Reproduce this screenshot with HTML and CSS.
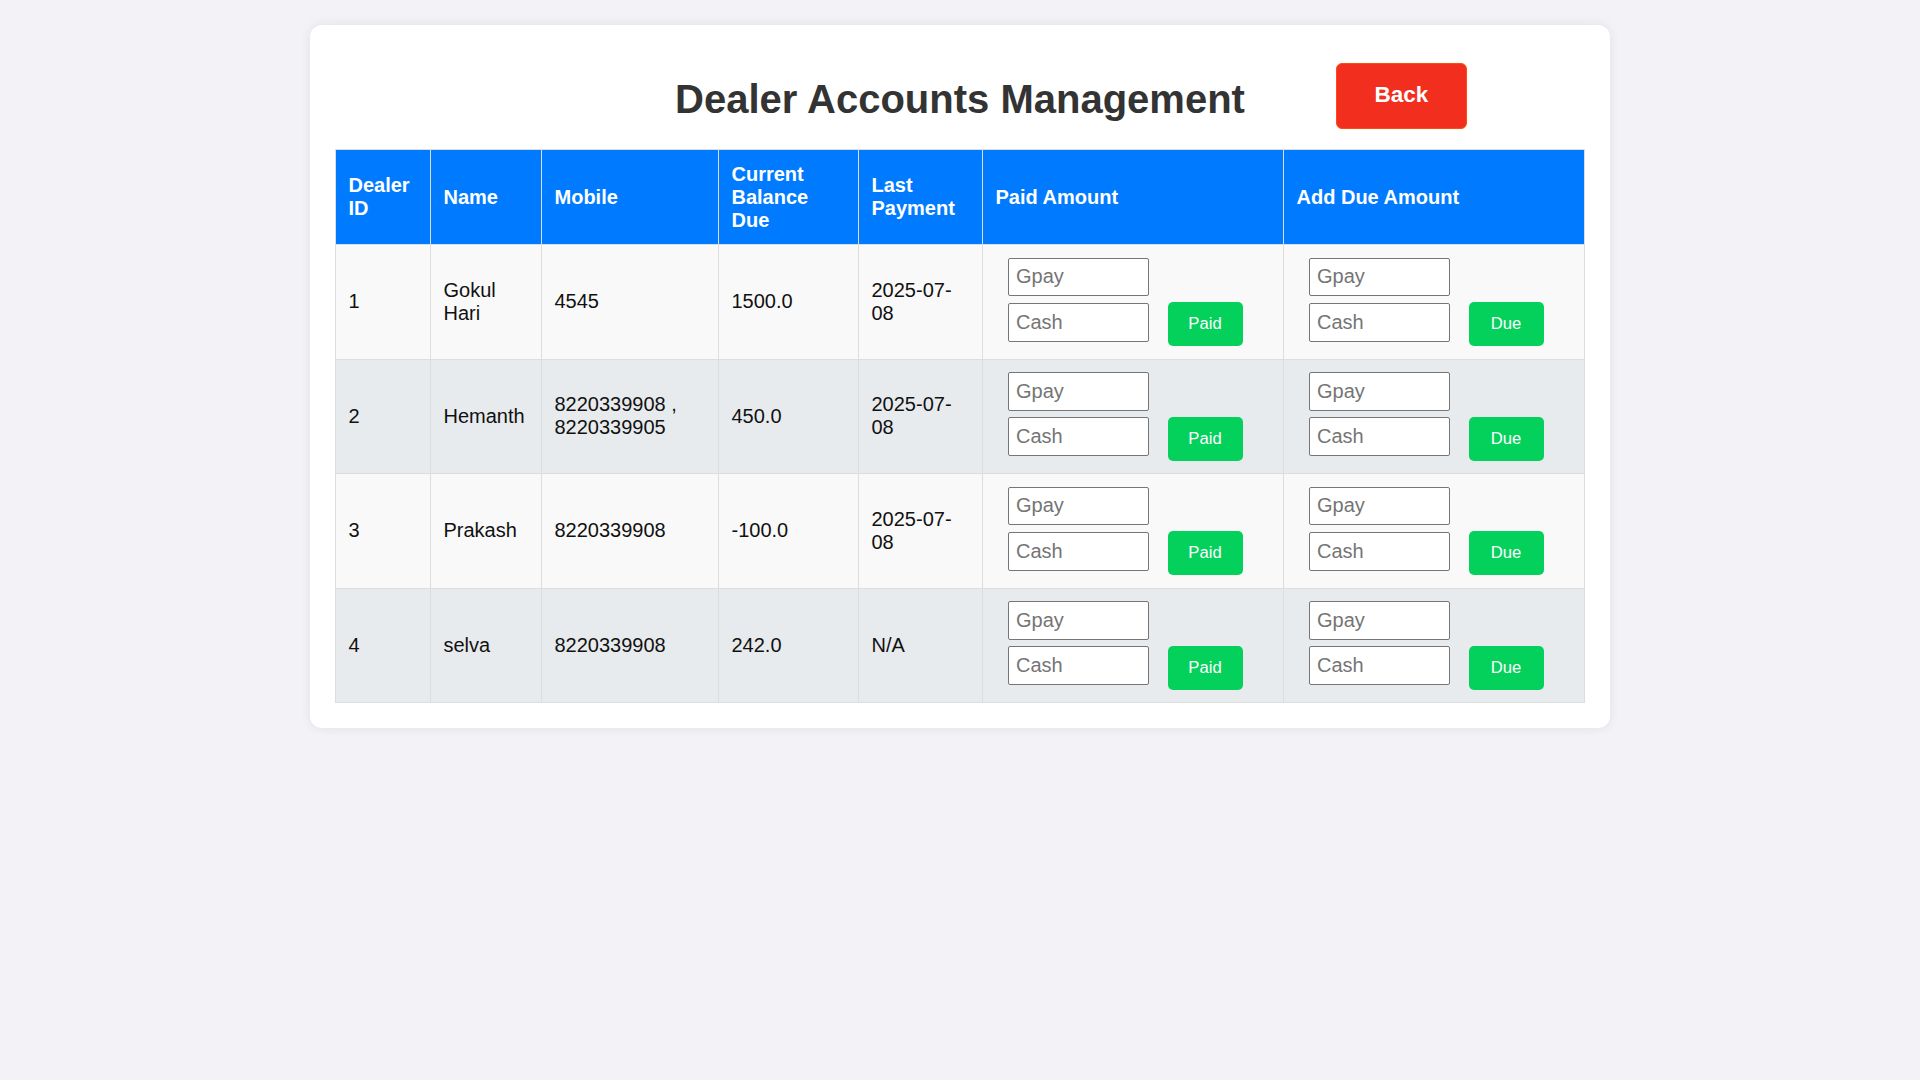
FILE: index.html
```html
<!DOCTYPE html>
<html lang="en">
<head>
<meta charset="utf-8">
<title>Dealer Accounts Management</title>
<link rel="stylesheet" href="styles.css">
</head>
<body>
<div class="card">
  <div class="page-head">
    <div class="head-spacer"></div>
    <h1 class="title">Dealer Accounts Management</h1>
    <div class="head-actions"><button class="btn-back" type="button">Back</button></div>
  </div>
  <table class="dealers">
    <colgroup>
      <col class="c-id"><col class="c-name"><col class="c-mobile"><col class="c-bal"><col class="c-last"><col class="c-paid"><col class="c-due">
    </colgroup>
    <thead>
      <tr>
        <th>Dealer ID</th>
        <th>Name</th>
        <th>Mobile</th>
        <th>Current Balance Due</th>
        <th>Last Payment</th>
        <th>Paid Amount</th>
        <th>Add Due Amount</th>
      </tr>
    </thead>
    <tbody>
      <tr>
        <td>1</td><td>Gokul Hari</td><td>4545</td><td>1500.0</td><td>2025-07-08</td>
        <td class="act"><div class="act-row"><div class="inputs"><input class="amt" placeholder="Gpay"><input class="amt" placeholder="Cash"></div><button class="btn-green" type="button">Paid</button></div></td>
        <td class="act"><div class="act-row"><div class="inputs"><input class="amt" placeholder="Gpay"><input class="amt" placeholder="Cash"></div><button class="btn-green" type="button">Due</button></div></td>
      </tr>
      <tr>
        <td>2</td><td>Hemanth</td><td>8220339908 , 8220339905</td><td>450.0</td><td>2025-07-08</td>
        <td class="act"><div class="act-row"><div class="inputs"><input class="amt" placeholder="Gpay"><input class="amt" placeholder="Cash"></div><button class="btn-green" type="button">Paid</button></div></td>
        <td class="act"><div class="act-row"><div class="inputs"><input class="amt" placeholder="Gpay"><input class="amt" placeholder="Cash"></div><button class="btn-green" type="button">Due</button></div></td>
      </tr>
      <tr>
        <td>3</td><td>Prakash</td><td>8220339908</td><td>-100.0</td><td>2025-07-08</td>
        <td class="act"><div class="act-row"><div class="inputs"><input class="amt" placeholder="Gpay"><input class="amt" placeholder="Cash"></div><button class="btn-green" type="button">Paid</button></div></td>
        <td class="act"><div class="act-row"><div class="inputs"><input class="amt" placeholder="Gpay"><input class="amt" placeholder="Cash"></div><button class="btn-green" type="button">Due</button></div></td>
      </tr>
      <tr>
        <td>4</td><td>selva</td><td>8220339908</td><td>242.0</td><td>N/A</td>
        <td class="act"><div class="act-row"><div class="inputs"><input class="amt" placeholder="Gpay"><input class="amt" placeholder="Cash"></div><button class="btn-green" type="button">Paid</button></div></td>
        <td class="act"><div class="act-row"><div class="inputs"><input class="amt" placeholder="Gpay"><input class="amt" placeholder="Cash"></div><button class="btn-green" type="button">Due</button></div></td>
      </tr>
    </tbody>
  </table>
</div>
</body>
</html>
```
FILE: styles.css
```css
* { box-sizing: border-box; }

body {
  margin: 0;
  padding: 25px 0;
  background: #f3f3f7;
  font-family: "Liberation Sans", Arial, sans-serif;
  font-size: 20px;
  color: #111;
}

.card {
  width: 1300px;
  margin: 0 auto;
  padding: 25px;
  background: #fff;
  border-radius: 12px;
  box-shadow: 0 0 12px rgba(0, 0, 0, 0.08);
}

.page-head {
  display: grid;
  grid-template-columns: 1fr auto 1fr;
  align-items: center;
  padding-top: 13px;
  margin-bottom: 20px;
}

.title {
  margin: 0;
  font-size: 40px;
  font-weight: bold;
  color: #333;
  line-height: normal;
  position: relative;
  top: 3px;
}

.head-actions {
  display: flex;
  justify-content: flex-start;
}

.btn-back {
  margin-left: 91px;
  width: 131px;
  height: 66px;
  background: #f22f1e;
  border: 1px solid #ff4a10;
  border-radius: 6px;
  color: #fff;
  font-family: "Liberation Sans", Arial, sans-serif;
  font-weight: bold;
  font-size: 22.5px;
  padding: 0 0 2px;
}

.dealers {
  width: 1249px;
  table-layout: fixed;
  border-collapse: collapse;
}

.c-id { width: 95px; }
.c-name { width: 111px; }
.c-mobile { width: 177px; }
.c-bal { width: 140px; }
.c-last { width: 124px; }
.c-paid { width: 301px; }
.c-due { width: 301px; }

.dealers th,
.dealers td {
  border: 1px solid #dddddd;
  padding: 12.5px;
  text-align: left;
  vertical-align: middle;
  line-height: normal;
}

.dealers th {
  background: #007bff;
  color: #fff;
  font-weight: bold;
}

.dealers tbody tr:nth-child(odd) { background: #f9f9f9; }
.dealers tbody tr:nth-child(even) { background: #e8ebee; }

.act-row {
  display: flex;
  align-items: flex-end;
  margin-left: 12.5px;
}

.inputs {
  display: flex;
  flex-direction: column;
  gap: 6.5px;
  margin-bottom: 4.5px;
}

.amt {
  display: block;
  width: 141px;
  height: 38.75px;
  padding: 0 7px;
  border: 1px solid #767676;
  border-radius: 2px;
  background: #fff;
  font-family: "Liberation Sans", Arial, sans-serif;
  font-size: 20px;
  color: #111;
}

.amt::placeholder { color: #757575; }

.btn-green {
  margin-left: 18.5px;
  width: 75px;
  height: 44px;
  border: none;
  border-radius: 5px;
  background: #03d15b;
  color: #fff;
  font-family: "Liberation Sans", Arial, sans-serif;
  font-size: 16.67px;
  padding: 0;
}
```
